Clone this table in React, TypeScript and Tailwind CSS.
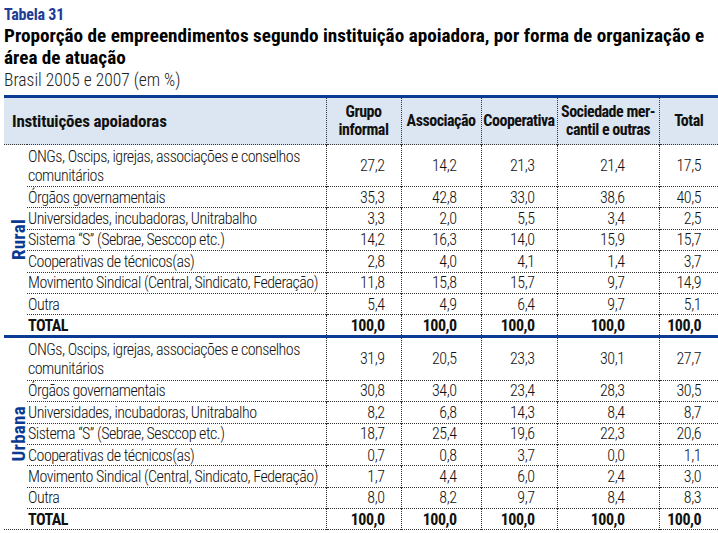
type Row = { label: string; values: string[]; tall?: boolean; total?: boolean };

const rural: Row[] = [
  { label: "ONGs, Oscips, igrejas, associações e conselhos comunitários", values: ["27,2", "14,2", "21,3", "21,4", "17,5"], tall: true },
  { label: "Órgãos governamentais", values: ["35,3", "42,8", "33,0", "38,6", "40,5"] },
  { label: "Universidades, incubadoras, Unitrabalho", values: ["3,3", "2,0", "5,5", "3,4", "2,5"] },
  { label: "Sistema “S” (Sebrae, Sesccop etc.)", values: ["14,2", "16,3", "14,0", "15,9", "15,7"] },
  { label: "Cooperativas de técnicos(as)", values: ["2,8", "4,0", "4,1", "1,4", "3,7"] },
  { label: "Movimento Sindical (Central, Sindicato, Federação)", values: ["11,8", "15,8", "15,7", "9,7", "14,9"] },
  { label: "Outra", values: ["5,4", "4,9", "6,4", "9,7", "5,1"] },
  { label: "TOTAL", values: ["100,0", "100,0", "100,0", "100,0", "100,0"], total: true },
];

const urbana: Row[] = [
  { label: "ONGs, Oscips, igrejas, associações e conselhos comunitários", values: ["31,9", "20,5", "23,3", "30,1", "27,7"], tall: true },
  { label: "Órgãos governamentais", values: ["30,8", "34,0", "23,4", "28,3", "30,5"] },
  { label: "Universidades, incubadoras, Unitrabalho", values: ["8,2", "6,8", "14,3", "8,4", "8,7"] },
  { label: "Sistema “S” (Sebrae, Sesccop etc.)", values: ["18,7", "25,4", "19,6", "22,3", "20,6"] },
  { label: "Cooperativas de técnicos(as)", values: ["0,7", "0,8", "3,7", "0,0", "1,1"] },
  { label: "Movimento Sindical (Central, Sindicato, Federação)", values: ["1,7", "4,4", "6,0", "2,4", "3,0"] },
  { label: "Outra", values: ["8,0", "8,2", "9,7", "8,4", "8,3"] },
  { label: "TOTAL", values: ["100,0", "100,0", "100,0", "100,0", "100,0"], total: true },
];

// padding on the right of each number column, so the figures sit where the print has them
const numPad = ["pr-[16px]", "pr-[24px]", "pr-[22px]", "pr-[34px]", "pr-[17px]"];

function Section({ name, rows, last }: { name: string; rows: Row[]; last?: boolean }) {
  const tallH = last ? "h-[44px]" : "h-[42px]";
  return (
    <tbody className={last ? "border-b border-dotted border-[#333]" : "border-b-[3px] border-solid border-[#0b3a93]"}>
      {rows.map((row, i) => (
        <tr
          key={row.label}
          className={`${row.tall ? tallH : "h-[21.4px]"} ${i < rows.length - 1 ? "border-b border-dotted border-[#333]" : ""}`}
        >
          {i === 0 ? (
            <td rowSpan={rows.length} className="p-0 align-middle">
              <div className="flex justify-end">
                <span className="translate-x-[1px] rotate-180 text-[19px] font-bold leading-none tracking-[0.3px] text-[#0b3a93] [writing-mode:vertical-rl]">
                  {name}
                </span>
              </div>
            </td>
          ) : null}
          <td className={`overflow-hidden p-0 pl-[1px] whitespace-normal ${row.total ? "font-bold" : ""}`}>{row.label}</td>
          {row.values.map((v, j) => (
            <td
              key={j}
              className={`border-l border-dotted border-[#333] p-0 text-right align-middle ${numPad[j]} ${row.total ? "font-bold" : ""}`}
            >
              {v}
            </td>
          ))}
        </tr>
      ))}
    </tbody>
  );
}

export default function App() {
  return (
    <div className="h-[533px] w-[718px] overflow-hidden bg-white pl-[4px] pt-[5px] font-['Roboto_Condensed','Liberation_Sans',sans-serif] text-[#111]">
      <p className="text-[16px] font-bold leading-[20px] tracking-[-0.2px] text-[#1f3c96]">Tabela 31</p>
      <h1 className="text-[19.2px] font-bold leading-[22px] text-black">
        Proporção de empreendimentos segundo instituição apoiadora, por forma de organização e área de atuação
      </h1>
      <p className="text-[17.5px] font-light leading-[22px] text-[#222]">Brasil 2005 e 2007 (em %)</p>

      <table className="mt-[4px] w-[714px] table-fixed border-collapse text-[16px] font-light leading-[19px] tracking-[-0.5px]">
        <colgroup>
          <col className="w-[23px]" />
          <col className="w-[299px]" />
          <col className="w-[75px]" />
          <col className="w-[80px]" />
          <col className="w-[76px]" />
          <col className="w-[102px]" />
          <col className="w-[59px]" />
        </colgroup>
        <thead className="border-t-[3px] border-solid border-[#0b3a93]">
          <tr className="h-[48px] border-b border-dotted border-[#333] bg-[#dce6f2] leading-[18px]">
            <th colSpan={2} className="p-0 pl-[8px] text-left text-[17px] font-bold tracking-[-0.2px]">
              Instituições apoiadoras
            </th>
            <th className="border-l border-dotted border-[#333] p-0 text-center font-bold">
              Grupo
              <br />
              informal
            </th>
            <th className="border-l border-dotted border-[#333] p-0 text-center font-bold">Associação</th>
            <th className="border-l border-dotted border-[#333] p-0 text-center font-bold">Cooperativa</th>
            <th className="border-l border-dotted border-[#333] p-0 text-center font-bold">
              Sociedade mer-
              <br />
              cantil e outras
            </th>
            <th className="border-l border-dotted border-[#333] p-0 text-center font-bold">Total</th>
          </tr>
        </thead>
        <Section name="Rural" rows={rural} />
        <Section name="Urbana" rows={urbana} last />
      </table>
    </div>
  );
}
